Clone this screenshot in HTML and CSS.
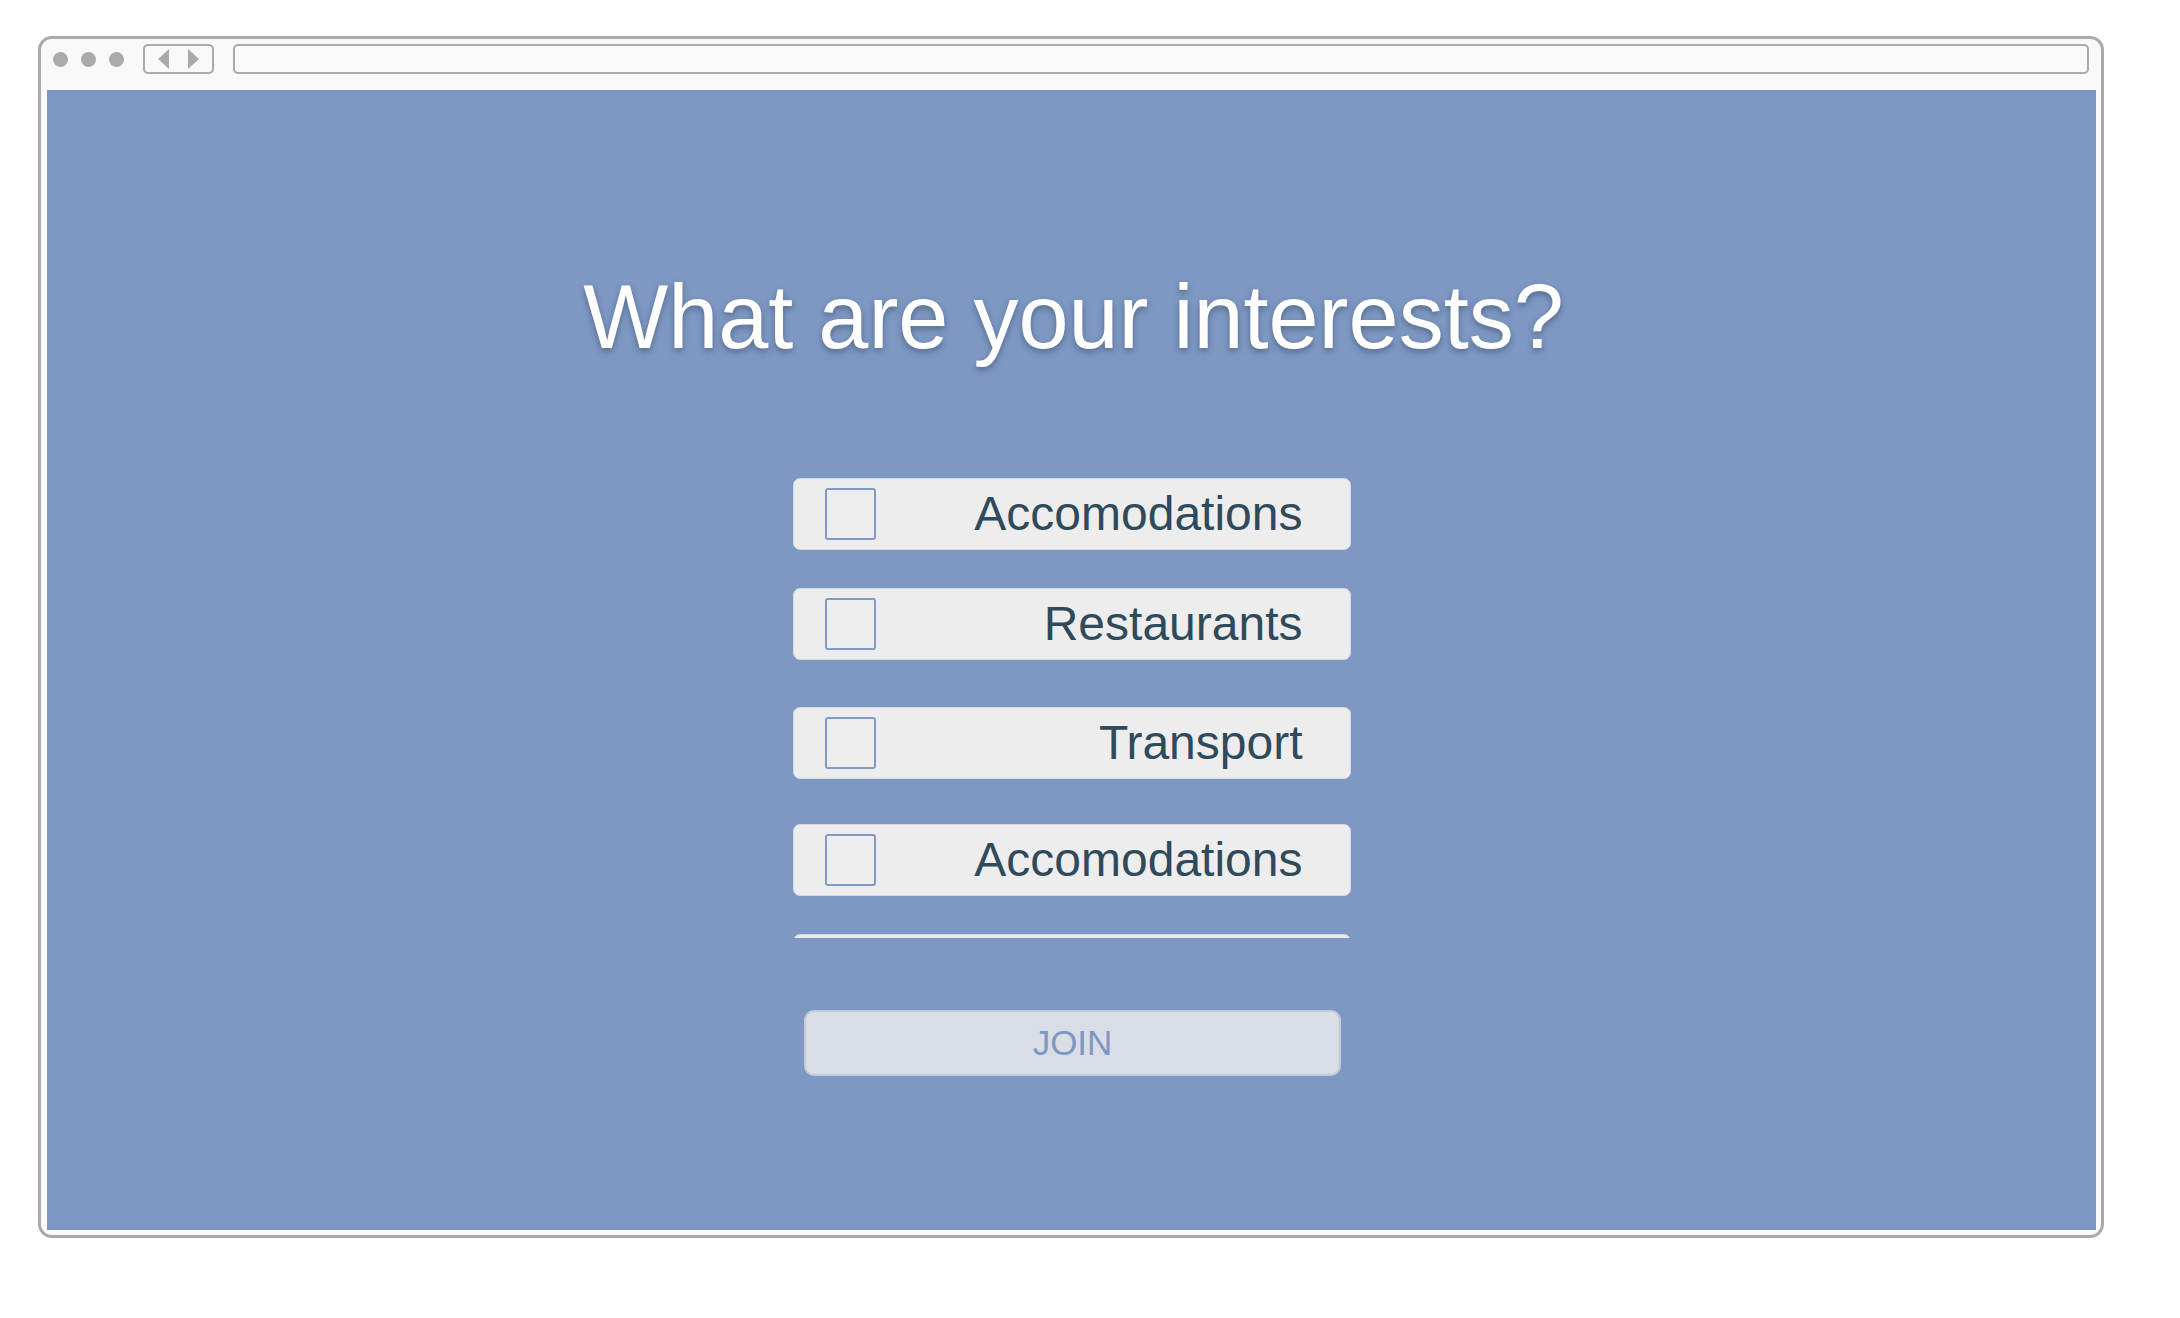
FILE: index.html
```html
<!DOCTYPE html>
<html lang="en">
<head>
<meta charset="utf-8">
<title>What are your interests?</title>
<link rel="stylesheet" href="styles.css">
</head>
<body>
<div class="window">
  <div class="toolbar">
    <div class="dots">
      <span class="dot"></span>
      <span class="dot"></span>
      <span class="dot"></span>
    </div>
    <div class="nav">
      <svg width="12" height="20" viewBox="0 0 12 20"><polygon points="11,0 11,20 0,10" fill="#aaaaaa"/></svg>
      <svg width="12" height="20" viewBox="0 0 12 20"><polygon points="1,0 1,20 12,10" fill="#aaaaaa"/></svg>
    </div>
    <div class="address"></div>
  </div>
  <div class="screen">
    <h1 class="title">What are your interests?</h1>
    <div class="list">
      <div class="item"><span class="box"></span><span class="label">Accomodations</span></div>
      <div class="item gap-small"><span class="box"></span><span class="label">Restaurants</span></div>
      <div class="item gap-large"><span class="box"></span><span class="label">Transport</span></div>
      <div class="item gap-mid"><span class="box"></span><span class="label">Accomodations</span></div>
      <div class="item gap-small"><span class="box"></span></div>
    </div>
    <button class="join">JOIN</button>
  </div>
</div>
</body>
</html>
```
FILE: styles.css
```css
* { box-sizing: border-box; }
html, body { margin: 0; padding: 0; background: #ffffff; }
body { font-family: "Liberation Sans", Arial, Helvetica, sans-serif; }

.window {
  margin: 36px 0 0 38px;
  width: 2066px;
  height: 1202px;
  border: 3px solid #aaaaaa;
  border-radius: 14px;
  background: #f9f9f9;
  padding: 0 5px 5px 6px;
  display: flex;
  flex-direction: column;
}

.toolbar {
  height: 51px;
  padding: 5px 7px 16px 6px;
  display: flex;
  align-items: center;
  gap: 19px;
}

.dots { display: flex; gap: 13px; align-items: center; }
.dot { width: 15px; height: 15px; border-radius: 50%; background: #aaaaaa; }

.nav {
  width: 71px;
  height: 30px;
  border: 2px solid #aaaaaa;
  border-radius: 5px;
  display: flex;
  align-items: center;
  justify-content: center;
  gap: 17px;
}
.nav svg { display: block; }

.address {
  flex: 1;
  height: 30px;
  border: 2px solid #aaaaaa;
  border-radius: 5px;
  background: #fafafa;
}

.screen {
  flex: 1;
  background: #7d98c3;
  display: flex;
  flex-direction: column;
  align-items: center;
}

.title {
  margin: 182px 0 0 4px;
  font-size: 90px;
  line-height: 90px;
  font-weight: normal;
  color: #ffffff;
  text-shadow: 0 3px 6px rgba(40, 50, 70, 0.45);
}

.list {
  margin-top: 116px;
  width: 558px;
  height: 460px;
  overflow: hidden;
  flex-shrink: 0;
}

.item {
  height: 72px;
  border-radius: 7px;
  background: #ededed;
  border: 1px solid #d3d9e3;
  display: flex;
  align-items: center;
  justify-content: space-between;
  padding: 0 47px 0 31px;
}
.item.gap-small { margin-top: 38px; }
.item.gap-large { margin-top: 47px; }
.item.gap-mid { margin-top: 45px; }

.box {
  width: 51px;
  height: 52px;
  border: 2px solid #7f9bc7;
  border-radius: 3px;
  background: #eeeeee;
}

.label {
  font-size: 48px;
  color: #2e4a5b;
  line-height: 1;
}

.join {
  margin: 72px 0 0 2px;
  width: 537px;
  height: 66px;
  border: 2px solid #c3cad5;
  border-radius: 10px;
  background: #d9dee6;
  color: #7d98c3;
  font-family: "Liberation Sans", Arial, Helvetica, sans-serif;
  font-size: 35px;
  padding: 0;
}
```
